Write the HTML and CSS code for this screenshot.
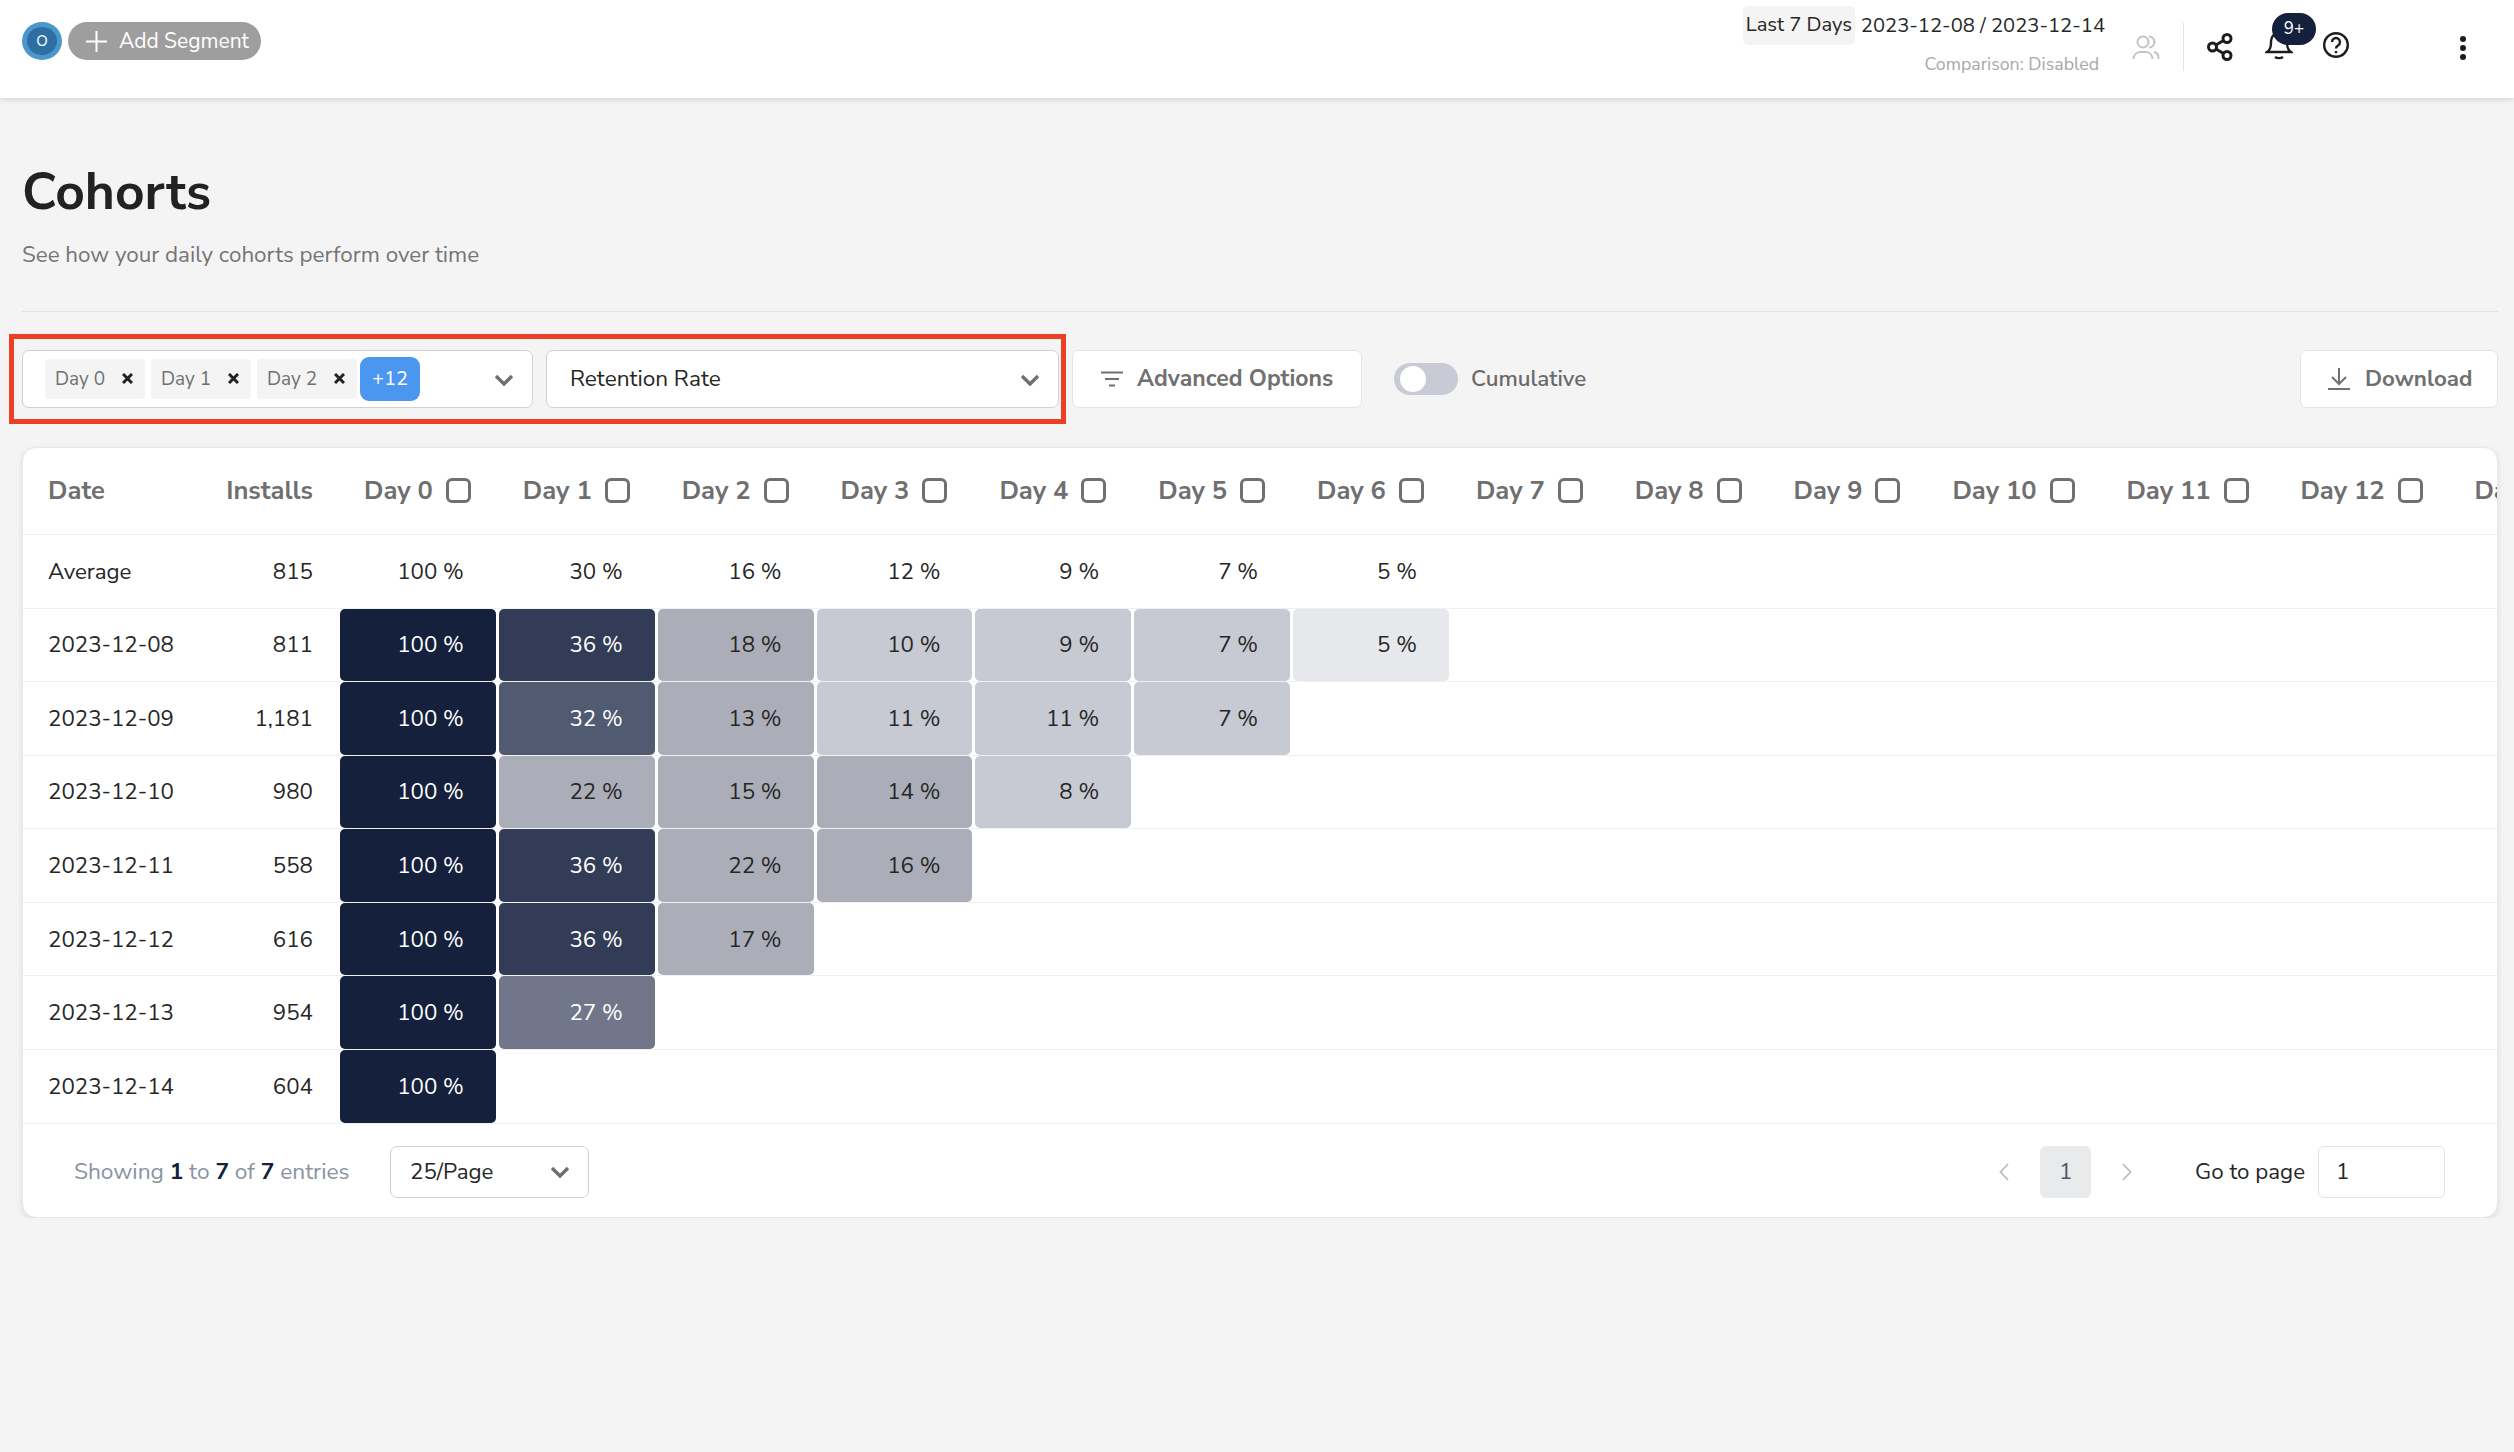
FILE: index.html
```html
<!DOCTYPE html>
<html lang="en">
<head>
    <meta charset="UTF-8">
    <title>Cohorts</title>
    <link rel="stylesheet" href="styles.css">
</head>
<body>
    <header class="topbar">
        <div class="segments">
            <div class="avatar"><span>O</span></div>
            <div class="add-segment">
                <svg width="21" height="21" viewBox="0 0 21 21"><path d="M10.5 0v21M0 10.5h21" stroke="#fff" stroke-width="2"/></svg>
                <span>Add Segment</span>
            </div>
        </div>
        <div class="topbar-right">
            <div class="date-block">
                <div class="date-line"><span class="range-chip">Last 7 Days</span><span class="range-dates">2023-12-08 / 2023-12-14</span></div>
                <div class="comparison">Comparison: Disabled</div>
            </div>
            <svg class="icon-users" width="28" height="24" viewBox="0 0 28 24" fill="none" stroke="#c4c4c4" stroke-width="2"><circle cx="11" cy="7" r="5.500"/><path d="M1.500 24v-1a7 7 0 0 1 7-6h5a7 7 0 0 1 7 6v1"/><path d="M17 1.500a5.500 5.500 0 0 1 0 11M22 17a6 6 0 0 1 4.500 6v1"/></svg>
            <div class="icons">
                <svg class="icon-share" width="26" height="28" viewBox="0 0 26 28" fill="none" stroke="#1d1d1d" stroke-width="3"><circle cx="20" cy="5.500" r="4"/><circle cx="5.500" cy="14" r="4"/><circle cx="20" cy="22.500" r="4"/><path d="M9 12l7.500-4.500M9 16l7.500 4.500"/></svg>
                <div class="bell">
                    <svg width="28" height="31" viewBox="0 0 28 31" fill="none" stroke="#1d1d1d" stroke-width="2.400"><path d="M2 22c3-2 4-5 4-9v-2a8 8 0 0 1 16 0v2c0 4 1 7 4 9z"/><path d="M10 27c2 1.500 6 1.500 8 0"/></svg>
                    <span class="badge">9+</span>
                </div>
                <svg class="icon-help" width="28" height="28" viewBox="0 0 28 28" fill="none" stroke="#1d1d1d" stroke-width="2.400"><circle cx="14" cy="14" r="11.800"/><path d="M10 11a4 4 0 1 1 6 3.500c-1.500 1-2 1.500-2 3"/><path d="M14 20v2.200"/></svg>
                <svg class="icon-more" width="8" height="26" viewBox="0 0 8 26" fill="#1d1d1d"><circle cx="4" cy="4" r="3"/><circle cx="4" cy="13" r="3"/><circle cx="4" cy="22" r="3"/></svg>
            </div>
        </div>
    </header>

    <main class="page">
        <h1>Cohorts</h1>
        <p class="subtitle">See how your daily cohorts perform over time</p>
        <hr class="divider">

        <div class="toolbar">
            <div class="select select-days">
                <span class="chip">Day 0 <svg width="11" height="11" viewBox="0 0 11 11"><path d="M1 1l9 9M10 1l-9 9" stroke="#222" stroke-width="3"/></svg></span>
                <span class="chip">Day 1 <svg width="11" height="11" viewBox="0 0 11 11"><path d="M1 1l9 9M10 1l-9 9" stroke="#222" stroke-width="3"/></svg></span>
                <span class="chip">Day 2 <svg width="11" height="11" viewBox="0 0 11 11"><path d="M1 1l9 9M10 1l-9 9" stroke="#222" stroke-width="3"/></svg></span>
                <span class="chip-more">+12</span>
                <svg class="chevron" width="20" height="12" viewBox="0 0 20 12"><path d="M2 2l8 8 8-8" fill="none" stroke="#707070" stroke-width="3.400"/></svg>
            </div>
            <div class="select select-metric">
                <span>Retention Rate</span>
                <svg class="chevron" width="20" height="12" viewBox="0 0 20 12"><path d="M2 2l8 8 8-8" fill="none" stroke="#707070" stroke-width="3.400"/></svg>
            </div>
            <div class="btn btn-advanced">
                <svg width="22" height="16" viewBox="0 0 22 16"><path d="M0 1.500h22M4 8h14M8 14.500h6" stroke="#707070" stroke-width="2"/></svg>
                <span>Advanced Options</span>
            </div>
            <div class="toggle"><span class="knob"></span></div>
            <span class="toggle-label">Cumulative</span>
            <div class="btn btn-download">
                <svg width="22" height="22" viewBox="0 0 22 22" fill="none" stroke="#707070" stroke-width="2"><path d="M11 0v15M4 9l7 7 7-7M0 21h22"/></svg>
                <span>Download</span>
            </div>
            <div class="highlight"></div>
        </div>

        <div class="card">
            <div class="table">
                <div class="row row-head">
                    <div class="cell">Date</div>
                    <div class="cell num">Installs</div>
                    <div class="cell day">Day 0 <i class="check"></i></div>
                    <div class="cell day">Day 1 <i class="check"></i></div>
                    <div class="cell day">Day 2 <i class="check"></i></div>
                    <div class="cell day">Day 3 <i class="check"></i></div>
                    <div class="cell day">Day 4 <i class="check"></i></div>
                    <div class="cell day">Day 5 <i class="check"></i></div>
                    <div class="cell day">Day 6 <i class="check"></i></div>
                    <div class="cell day">Day 7 <i class="check"></i></div>
                    <div class="cell day">Day 8 <i class="check"></i></div>
                    <div class="cell day">Day 9 <i class="check"></i></div>
                    <div class="cell day">Day 10 <i class="check"></i></div>
                    <div class="cell day">Day 11 <i class="check"></i></div>
                    <div class="cell day">Day 12 <i class="check"></i></div>
                    <div class="cell day">Day 13 <i class="check"></i></div>
                </div>
                <div class="row row-avg">
                    <div class="cell">Average</div>
                    <div class="cell num">815</div>
                    <div class="heat">100 %</div>
                    <div class="heat">30 %</div>
                    <div class="heat">16 %</div>
                    <div class="heat">12 %</div>
                    <div class="heat">9 %</div>
                    <div class="heat">7 %</div>
                    <div class="heat">5 %</div>
                </div>
                <div class="row">
                    <div class="cell">2023-12-08</div>
                    <div class="cell num">811</div>
                    <div class="heat h6">100 %</div>
                    <div class="heat h5">36 %</div>
                    <div class="heat h2">18 %</div>
                    <div class="heat h1">10 %</div>
                    <div class="heat h1">9 %</div>
                    <div class="heat h1">7 %</div>
                    <div class="heat h0">5 %</div>
                </div>
                <div class="row">
                    <div class="cell">2023-12-09</div>
                    <div class="cell num">1,181</div>
                    <div class="heat h6">100 %</div>
                    <div class="heat h4">32 %</div>
                    <div class="heat h2">13 %</div>
                    <div class="heat h1">11 %</div>
                    <div class="heat h1">11 %</div>
                    <div class="heat h1">7 %</div>
                </div>
                <div class="row">
                    <div class="cell">2023-12-10</div>
                    <div class="cell num">980</div>
                    <div class="heat h6">100 %</div>
                    <div class="heat h2">22 %</div>
                    <div class="heat h2">15 %</div>
                    <div class="heat h2">14 %</div>
                    <div class="heat h1">8 %</div>
                </div>
                <div class="row">
                    <div class="cell">2023-12-11</div>
                    <div class="cell num">558</div>
                    <div class="heat h6">100 %</div>
                    <div class="heat h5">36 %</div>
                    <div class="heat h2">22 %</div>
                    <div class="heat h2">16 %</div>
                </div>
                <div class="row">
                    <div class="cell">2023-12-12</div>
                    <div class="cell num">616</div>
                    <div class="heat h6">100 %</div>
                    <div class="heat h5">36 %</div>
                    <div class="heat h2">17 %</div>
                </div>
                <div class="row">
                    <div class="cell">2023-12-13</div>
                    <div class="cell num">954</div>
                    <div class="heat h6">100 %</div>
                    <div class="heat h3">27 %</div>
                </div>
                <div class="row">
                    <div class="cell">2023-12-14</div>
                    <div class="cell num">604</div>
                    <div class="heat h6">100 %</div>
                </div>
            </div>

            <div class="table-footer">
                <span class="entries">Showing <b>1</b> to <b>7</b> of <b>7</b> entries</span>
                <div class="page-size">
                    <span>25/Page</span>
                    <svg width="20" height="12" viewBox="0 0 20 12"><path d="M2 2l8 8 8-8" fill="none" stroke="#707070" stroke-width="3.400"/></svg>
                </div>
                <div class="pager">
                    <svg width="10" height="18" viewBox="0 0 10 18"><path d="M9 1L1.500 9 9 17" fill="none" stroke="#b9bcc6" stroke-width="1.800"/></svg>
                    <span class="page-num">1</span>
                    <svg width="10" height="18" viewBox="0 0 10 18"><path d="M1 1l7.500 8L1 17" fill="none" stroke="#b9bcc6" stroke-width="1.800"/></svg>
                    <span class="goto">Go to page</span>
                    <div class="goto-input">1</div>
                </div>
            </div>
        </div>
    </main>
</body>
</html>
```

FILE: styles.css
```css
* {
    box-sizing: border-box;
}
body {
    margin: 0;
    background-color: #f4f4f4;
    color: #262626;
    font-family: "Nunito Sans", Lato, "Noto Sans", sans-serif;
    font-size: 22.3px;
}

/* top bar */
.topbar {
    display: flex;
    justify-content: space-between;
    height: 98px;
    padding-left: 22px;
    background-color: #fff;
    box-shadow: 0 2px 6px rgba(0, 0, 0, 0.12);
}
.segments {
    display: flex;
    gap: 6px;
    margin-top: 22px;
}
.avatar {
    display: flex;
    justify-content: center;
    align-items: center;
    width: 40px;
    height: 38px;
    border-radius: 50%;
    background-color: #4a97cc;
}
.avatar span {
    display: flex;
    justify-content: center;
    align-items: center;
    width: 30px;
    height: 28px;
    border-radius: 50%;
    background-color: #2f6ea3;
    color: #fff;
    font-size: 15px;
}
.add-segment {
    display: flex;
    align-items: center;
    gap: 12px;
    width: 193px;
    height: 38px;
    padding-left: 18px;
    border-radius: 19px;
    background-color: #9e9e9e;
    color: #fff;
    font-size: 21px;
}
.topbar-right {
    display: flex;
    align-items: flex-start;
}
.date-block {
    display: flex;
    flex-direction: column;
    align-items: flex-end;
    margin-top: 7px;
}
.date-line {
    display: flex;
    align-items: center;
    gap: 6px;
    height: 39px;
    padding-bottom: 2px;
    font-size: 20.2px;
}
.range-chip {
    display: flex;
    align-items: center;
    justify-content: center;
    width: 112px;
    height: 39px;
    padding-bottom: 2px;
    border-radius: 5px;
    background-color: #f4f4f4;
}
.comparison {
    margin-top: 6px;
    margin-right: 6px;
    color: #a8a8a8;
    font-size: 17.8px;
}
.icon-users {
    margin: 35px 0 0 27px;
}
.icons {
    display: flex;
    align-items: flex-start;
    height: 48px;
    margin: 23px 0 0 23px;
    padding-left: 23px;
    border-left: 1px solid #e2e2e2;
}
.icon-share {
    margin-top: 10px;
}
.bell {
    position: relative;
    margin: 7px 0 0 32px;
}
.badge {
    position: absolute;
    top: -17px;
    left: 7px;
    width: 44px;
    height: 32px;
    border-radius: 16px;
    background-color: #14203c;
    color: #fff;
    font-size: 17px;
    line-height: 32px;
    text-align: center;
}
.icon-help {
    margin: 8px 0 0 29px;
}
.icon-more {
    margin: 12px 47px 0 109px;
}

/* page head */
.page {
    padding: 0 16px 0 22px;
}
h1 {
    margin: 64px 0 0 0;
    height: 60px;
    color: #222;
    font-size: 51.5px;
    font-weight: 700;
    line-height: 60px;
}
.subtitle {
    margin: 17.5px 0 0 0;
    height: 30px;
    color: #757575;
    font-size: 22.4px;
    line-height: 30px;
}
.divider {
    height: 1px;
    margin: 41px 0 0 0;
    border: none;
    background-color: #e2e2e2;
}

/* toolbar */
.toolbar {
    position: relative;
    display: flex;
    align-items: center;
    gap: 13px;
    height: 58px;
    margin-top: 38px;
}
.select {
    position: relative;
    display: flex;
    align-items: center;
    height: 58px;
    border: 1px solid #cfd0da;
    border-radius: 7px;
    background-color: #fff;
}
.select .chevron {
    position: absolute;
    top: 23px;
    right: 18px;
}
.select-days {
    width: 511px;
    padding-left: 22px;
    gap: 6px;
}
.select-metric {
    width: 513px;
    padding-left: 23px;
    font-size: 22.6px;
}
.chip {
    display: flex;
    align-items: center;
    justify-content: space-between;
    width: 100px;
    height: 40px;
    padding: 0 12px 0 10px;
    border-radius: 4px;
    background-color: #f4f4f4;
    color: #707070;
    font-size: 19px;
}
.chip-more {
    width: 60px;
    height: 44px;
    margin-left: -3px;
    border-radius: 9px;
    background-color: #4b96ee;
    color: #fff;
    font-size: 20px;
    line-height: 44px;
    text-align: center;
}
.btn {
    display: flex;
    align-items: center;
    height: 58px;
    border: 1px solid #e4e4e4;
    border-radius: 7px;
    background-color: #fff;
    color: #707070;
    font-weight: 700;
}
.btn-advanced {
    gap: 14px;
    width: 290px;
    padding-left: 28px;
    font-size: 23px;
}
.btn-download {
    gap: 15px;
    width: 198px;
    margin-left: auto;
    padding-left: 27px;
    font-size: 22.4px;
}
.toggle {
    width: 64px;
    height: 32px;
    margin-left: 19px;
    padding: 3px 0 0 6px;
    border-radius: 16px;
    background-color: #c8cbd5;
}
.knob {
    display: block;
    width: 26px;
    height: 26px;
    border-radius: 50%;
    background-color: #fff;
}
.toggle-label {
    color: #6a6a6a;
    font-size: 22.3px;
    font-weight: 600;
}
.highlight {
    position: absolute;
    top: -16px;
    left: -13px;
    width: 1057px;
    height: 90px;
    border: 5px solid #ea4025;
    pointer-events: none;
}

/* table card */
.card {
    margin-top: 39px;
    height: 771.5px;
    border: 1px solid #e8e8e8;
    border-radius: 14px;
    background-color: #fff;
    box-shadow: 0 2px 6px rgba(0, 0, 0, 0.1);
}
.table {
    overflow: hidden;
    border-radius: 14px 14px 0 0;
}
.row {
    display: grid;
    grid-template-columns: 160px 155px repeat(10, 158.85px) repeat(4, 174px);
    height: 73.6px;
    border-bottom: 1px solid #f0f0f0;
}
.row-head {
    height: 87px;
    color: #6f6f6f;
    font-size: 25.5px;
    font-weight: 700;
}
.row-avg {
    height: 74px;
}
.cell {
    display: flex;
    align-items: center;
    padding-left: 25px;
    white-space: nowrap;
}
.num {
    justify-content: flex-end;
    padding: 0 25px 0 0;
}
.day {
    gap: 13px;
    padding-left: 26px;
}
.check {
    flex: none;
    width: 25px;
    height: 25px;
    border: 3.5px solid #707070;
    border-radius: 6px;
}
.heat {
    display: flex;
    align-items: center;
    justify-content: flex-end;
    margin: 0 1px 0 2px;
    padding-right: 32px;
    border-radius: 5px;
    white-space: nowrap;
}
.h0 { background-color: #e7e8ec; }
.h1 { background-color: #c7cad3; }
.h2 { background-color: #abaeb9; }
.h3 { background-color: #71768a; color: #fff; }
.h4 { background-color: #505a70; color: #fff; }
.h5 { background-color: #323c56; color: #fff; }
.h6 { background-color: #14203c; color: #fff; }

/* footer */
.table-footer {
    display: flex;
    align-items: center;
    height: 95.5px;
    padding: 1px 52px 0 51px;
}
.entries {
    width: 316px;
    color: #8a92a3;
    font-size: 22.7px;
}
.entries b {
    color: #14203c;
}
.page-size {
    display: flex;
    align-items: center;
    justify-content: space-between;
    width: 199px;
    height: 52px;
    padding: 0 18px 0 19px;
    border: 1px solid #cfd0da;
    border-radius: 7px;
}
.pager {
    display: flex;
    align-items: center;
    margin-left: auto;
}
.page-num {
    width: 51px;
    height: 52px;
    margin: 0 31px;
    border-radius: 6px;
    background-color: #e9eaec;
    color: #4a5568;
    line-height: 52px;
    text-align: center;
}
.goto {
    margin-left: 63px;
}
.goto-input {
    width: 127px;
    height: 52px;
    margin-left: 13px;
    padding-left: 17px;
    border: 1px solid #e2e2e2;
    border-radius: 6px;
    line-height: 50px;
}
```
